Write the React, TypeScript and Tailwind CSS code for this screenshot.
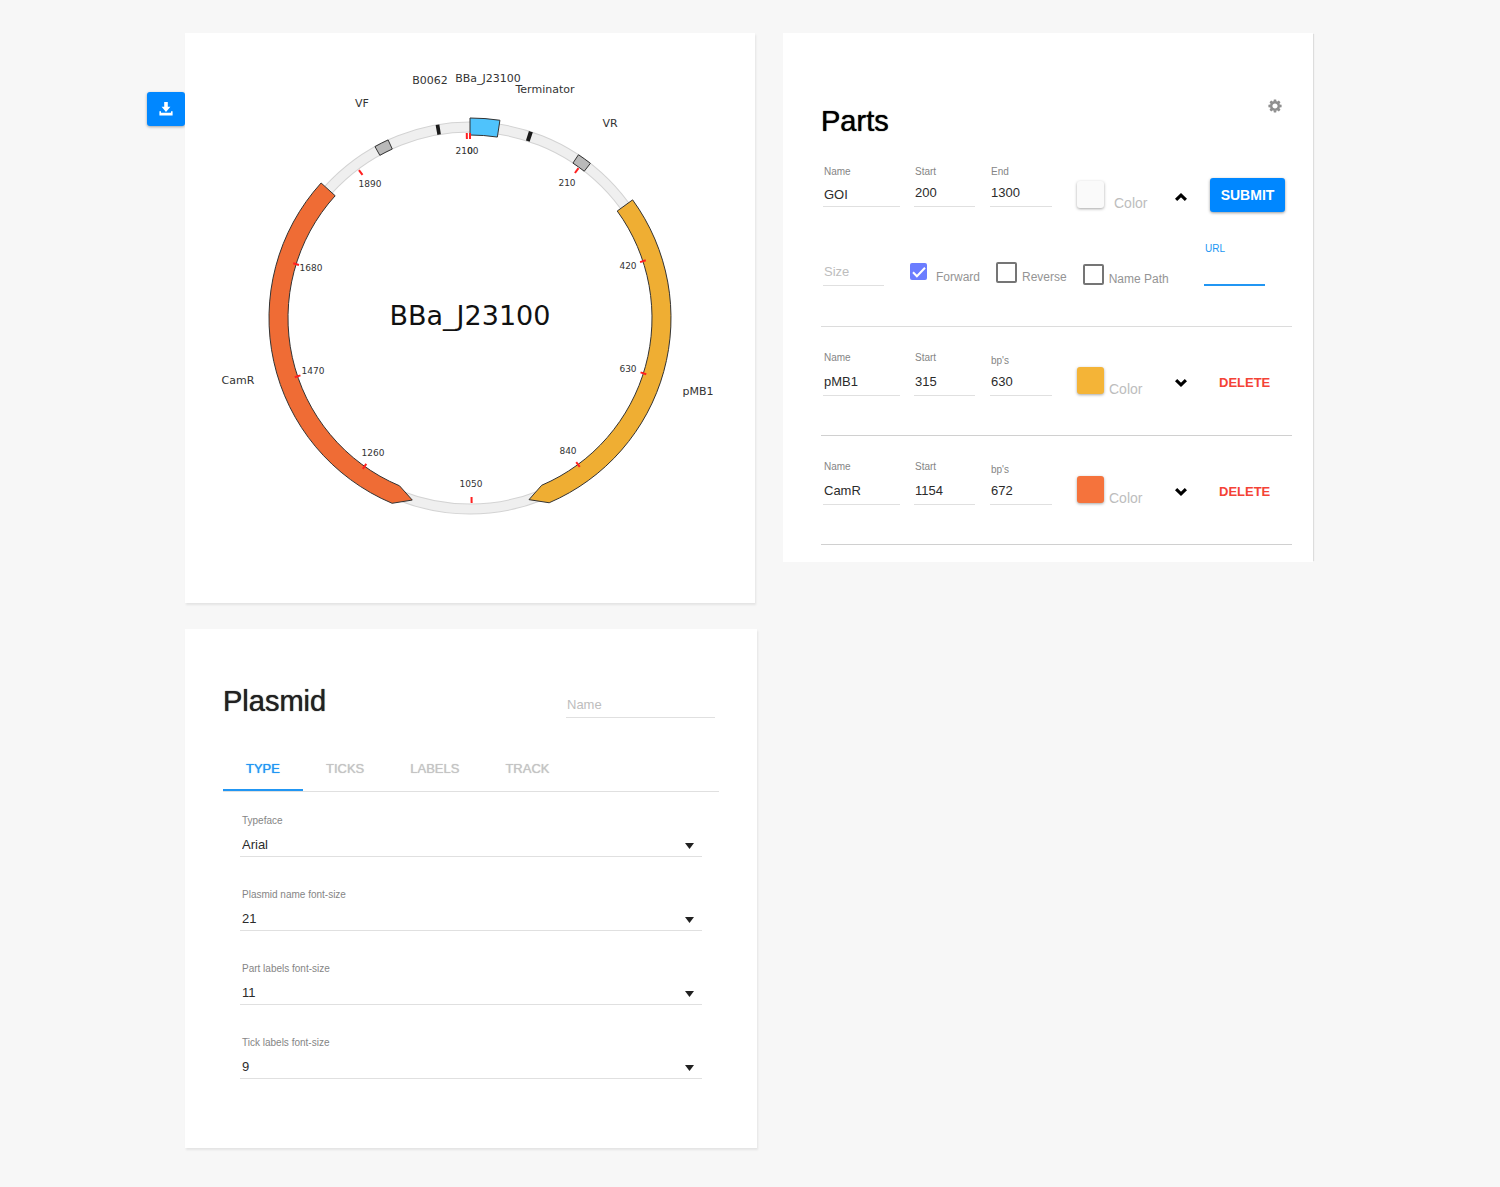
import { useId, useState } from "react";
import type { ReactNode } from "react";

const LABEL = "block text-[10px] leading-3 text-[#858585]";
const INPUT =
  "block h-[26px] w-full min-w-0 rounded-none border-b border-[#e0e0e0] bg-transparent text-[13px] text-[#2b2b2b] outline-none placeholder:text-[#bdbdbd]";

/* ---------- Plasmid map ---------- */

const polar = (angle: number, r: number) => {
  const a = (angle * Math.PI) / 180;
  return `${(Math.sin(a) * r).toFixed(2)} ${(-Math.cos(a) * r).toFixed(2)}`;
};

const band = (from: number, to: number, inner: number, outer: number) => {
  const large = to - from > 180 ? 1 : 0;
  return `M${polar(from, outer)}A${outer} ${outer} 0 ${large} 1 ${polar(to, outer)}L${polar(to, inner)}A${inner} ${inner} 0 ${large} 0 ${polar(from, inner)}Z`;
};

const INNER = 182;
const OUTER = 201;
const HEAD = 5.2;

const forwardArrow = (from: number, to: number) =>
  `M${polar(from, OUTER)}A${OUTER} ${OUTER} 0 0 1 ${polar(to - HEAD, OUTER)}L${polar(to, 191)}L${polar(to - HEAD, INNER)}A${INNER} ${INNER} 0 0 0 ${polar(from, INNER)}Z`;

const reverseArrow = (from: number, to: number) =>
  `M${polar(to, OUTER)}A${OUTER} ${OUTER} 0 0 0 ${polar(from + HEAD, OUTER)}L${polar(from, 191)}L${polar(from + HEAD, INNER)}A${INNER} ${INNER} 0 0 1 ${polar(to, INNER)}Z`;

const TICKS = [
  { bp: 0, x: 0, y: -164 },
  { bp: 210, x: 97, y: -132 },
  { bp: 420, x: 158, y: -49 },
  { bp: 630, x: 158, y: 54 },
  { bp: 840, x: 98, y: 136 },
  { bp: 1050, x: 1, y: 169 },
  { bp: 1260, x: -97, y: 138 },
  { bp: 1470, x: -157, y: 56 },
  { bp: 1680, x: -159, y: -47 },
  { bp: 1890, x: -100, y: -131 },
  { bp: 2100, x: -3, y: -164 },
];

const PART_LABELS = [
  { text: "VF", x: -108, y: -211 },
  { text: "B0062", x: -40, y: -234 },
  { text: "BBa_J23100", x: 18, y: -236 },
  { text: "Terminator", x: 75, y: -225 },
  { text: "VR", x: 140, y: -191 },
  { text: "pMB1", x: 228, y: 77 },
  { text: "CamR", x: -232, y: 66 },
];

function PlasmidMap() {
  return (
    <svg viewBox="-285 -285 570 570" className="block w-full font-['DejaVu_Sans',sans-serif]" role="img" aria-label="Plasmid map of BBa_J23100">
      <circle r="191" fill="none" stroke="#d3d3d3" strokeWidth="11" />
      <circle r="191" fill="none" stroke="#efefef" strokeWidth="9" />
      <g stroke="#333" strokeWidth="1">
        <path d={band(0, 8.6, 183, 200)} fill="#4fc3fc" />
        <path d={band(33.6, 37.9, 186, 196)} fill="#b9b9b9" />
        <path d={band(331, 335.3, 186, 196)} fill="#b9b9b9" />
        <path d={forwardArrow(54, 162)} fill="#efae33" />
        <path d={reverseArrow(197.6, 312.2)} fill="#ef6c35" />
      </g>
      <path d={band(17.5, 18.7, 186, 196)} fill="#1a1a1a" />
      <path d={band(349.9, 351, 186, 196)} fill="#1a1a1a" />
      {TICKS.map((t) => (
        <g key={t.bp}>
          <path d={`M${polar((t.bp * 359) / 2100, 179)}L${polar((t.bp * 359) / 2100, 185)}`} stroke="#ff2020" strokeWidth="2" />
          <text x={t.x} y={t.y} textAnchor="middle" className="text-[9px]" fill="#333">
            {t.bp}
          </text>
        </g>
      ))}
      {PART_LABELS.map((l) => (
        <text key={l.text} x={l.x} y={l.y} textAnchor="middle" className="text-[11px]" fill="#333">
          {l.text}
        </text>
      ))}
      <text x="0" y="7" textAnchor="middle" className="text-[27px]" fill="#111">
        BBa_J23100
      </text>
    </svg>
  );
}

/* ---------- Icons ---------- */

function DownloadIcon() {
  return (
    <svg width="14" height="14" viewBox="0 0 14 14" fill="#fff" aria-hidden="true">
      <path d="M5.2 0h3.6v4.8h2.6L7 10 2.6 4.8h2.6z" />
      <path d="M.4 9.2H2v1.6h10V9.2h1.6v4.2H.4z" />
    </svg>
  );
}

function GearIcon() {
  return (
    <svg width="14" height="14" viewBox="-7 -7 14 14" aria-hidden="true">
      <circle r="3.8" fill="none" stroke="#8f8f8f" strokeWidth="2.4" />
      {[0, 45, 90, 135, 180, 225, 270, 315].map((a) => (
        <path key={a} d="M-1.5 -4.4L-1.2 -6.6H1.2L1.5 -4.4Z" fill="#8f8f8f" transform={`rotate(${a})`} />
      ))}
    </svg>
  );
}

function Chevron({ up }: { up?: boolean }) {
  return (
    <svg width="12" height="8" viewBox="0 0 12 8" fill="none" stroke="#000" strokeWidth="3.2" aria-hidden="true">
      <path d={up ? "M1.1 6.8L6 2.2L10.9 6.8" : "M1.1 1.2L6 5.8L10.9 1.2"} />
    </svg>
  );
}

/* ---------- Parts panel ---------- */

type FieldProps = { label: string; value: string; labelClass: string; inputClass?: string; className?: string };

function Field({ label, value, labelClass, inputClass = "pb-0.5", className = "" }: FieldProps) {
  const id = useId();
  return (
    <div className={className}>
      <label htmlFor={id} className={`${LABEL} ${labelClass} pl-px`}>
        {label}
      </label>
      <input id={id} defaultValue={value} className={`${INPUT} pl-px ${inputClass}`} />
    </div>
  );
}

function Swatch({ color, gap }: { color: string; gap: string }) {
  const id = useId();
  return (
    <div className={`flex items-baseline ${gap}`}>
      <button id={id} type="button" className={`h-[27px] w-[27px] shrink-0 rounded-[3px] shadow-[0_1px_3px_rgba(0,0,0,0.35)] ${color}`} />
      <label htmlFor={id} className="text-[14px] leading-none text-[#bdbdbd]">
        Color
      </label>
    </div>
  );
}

const ROW = "grid grid-cols-[93fr_76fr_87fr_98fr_35fr_82fr] items-end";

function PartRow({ name, start, bps, color }: { name: string; start: string; bps: string; color: string }) {
  return (
    <li className={`${ROW} border-b border-[#d0d0d0] pt-[25px] pb-[39px]`}>
      <Field label="Name" value={name} labelClass="mb-1.5" className="mr-3.5 ml-0.5" />
      <Field label="Start" value={start} labelClass="mb-1.5" className="mr-[15px]" />
      <Field label="bp's" value={bps} labelClass="mb-[3px]" className="mr-[25px]" />
      <Swatch color={color} gap="gap-[5px]" />
      <button type="button" aria-label={`Expand ${name}`} className="flex h-[27px] w-3 items-center">
        <Chevron />
      </button>
      <button type="button" className="flex h-[27px] items-center pl-[9px] text-[13px] font-bold text-[#f44336]">
        DELETE
      </button>
    </li>
  );
}

function Check({ label, checked, className, boxClass, children }: { label: string; checked?: boolean; className: string; boxClass: string; children?: ReactNode }) {
  return (
    <label className={`flex items-end text-[12px] leading-4 whitespace-nowrap text-[#949494] ${className}`}>
      <span className={`relative block shrink-0 ${boxClass}`}>
        <input
          type="checkbox"
          defaultChecked={checked}
          className="peer block h-full w-full appearance-none rounded-[2px] border-2 border-[#757575] checked:border-0 checked:bg-[#6b7dff]"
        />
        {children}
      </span>
      {label}
    </label>
  );
}

function PartsPanel() {
  return (
    <section className="bg-white pt-[66px] pr-[21px] pb-[17px] pl-[38px] shadow-[2px_0_1px_-1px_rgba(0,0,0,0.1)]">
      <header className="flex items-start justify-between pr-[10px]">
        <h2 className="mt-1 text-[29px] leading-9 font-medium text-black [text-shadow:0_0_1px_currentColor]">Parts</h2>
        <button type="button" aria-label="Settings">
          <GearIcon />
        </button>
      </header>

      <form className="border-b border-[#dcdcdc] pt-[27px] pb-10" onSubmit={(e) => e.preventDefault()}>
        <div className={ROW}>
          <Field label="Name" value="GOI" labelClass="mb-[3px]" inputClass="pt-0.5" className="mr-3.5 mb-[5px] ml-0.5" />
          <Field label="Start" value="200" labelClass="mb-[3px]" className="mr-[15px] mb-[5px]" />
          <Field label="End" value="1300" labelClass="mb-[3px]" className="mr-[25px] mb-[5px]" />
          <div className="mb-0.5">
            <Swatch color="bg-[#fafafa]" gap="gap-2.5" />
          </div>
          <button type="button" aria-label="Collapse" className="mb-0.5 flex h-[27px] w-3 items-center">
            <Chevron up />
          </button>
          <button
            type="submit"
            className="mr-[7px] h-[34px] rounded-[3px] bg-[#0087ff] text-[14px] font-bold text-white shadow-[0_1px_3px_rgba(0,0,0,0.4)]"
          >
            SUBMIT
          </button>
        </div>

        <div className="mt-[31px] flex items-end pl-0.5">
          <input aria-label="Size" placeholder="Size" className={`${INPUT} max-w-[61px] pb-0.5 pl-px`} />
          <Check label="Forward" checked className="mb-px ml-[26px]" boxClass="mr-[9px] mb-[5px] h-[17px] w-[17px]">
            <svg viewBox="0 0 17 17" className="pointer-events-none absolute inset-0 hidden h-full w-full peer-checked:block" fill="none" stroke="#fff" strokeWidth="2" aria-hidden="true">
              <path d="M3 9.2L6.9 13.2L15 4.8" />
            </svg>
          </Check>
          <Check label="Reverse" className="mb-px ml-4" boxClass="mr-[5px] mb-0.5 h-[21px] w-[21px]" />
          <Check label="Name Path" className="-mb-px ml-4" boxClass="mr-[5px] mb-0.5 h-[21px] w-[21px]" />
          <div className="mr-[27px] ml-auto w-[61px]">
            <label htmlFor="part-url" className="mb-[5px] block pl-px text-[10px] leading-3 text-[#2196f3]">
              URL
            </label>
            <input id="part-url" className="block h-[26px] w-full border-b-2 border-[#2196f3] pl-px text-[13px] outline-none" />
          </div>
        </div>
      </form>

      <ul>
        <PartRow name="pMB1" start="315" bps="630" color="bg-[#f4b437]" />
        <PartRow name="CamR" start="1154" bps="672" color="bg-[#f5733c]" />
      </ul>
    </section>
  );
}

/* ---------- Plasmid settings ---------- */

const SETTINGS = [
  { label: "Typeface", value: "Arial" },
  { label: "Plasmid name font-size", value: "21" },
  { label: "Part labels font-size", value: "11" },
  { label: "Tick labels font-size", value: "9" },
];

function SelectField({ label, value }: { label: string; value: string }) {
  const id = useId();
  return (
    <div>
      <label htmlFor={id} className={`${LABEL} mb-1 pl-0.5`}>
        {label}
      </label>
      <div className="relative">
        <select id={id} defaultValue={value} className={`${INPUT} appearance-none pt-[3px] pl-0.5`}>
          <option>{value}</option>
        </select>
        <svg width="9" height="6" viewBox="0 0 9 6" className="pointer-events-none absolute right-2 bottom-2" aria-hidden="true">
          <path d="M0 0H9L4.5 6Z" fill="#212121" />
        </svg>
      </div>
    </div>
  );
}

function PlasmidPanel() {
  const [tab, setTab] = useState("TYPE");
  return (
    <section className="bg-white px-[38px] pt-[54px] pb-[69px] shadow-[1px_2px_2px_rgba(0,0,0,0.08)]">
      <header className="flex items-end justify-between pr-1">
        <h2 className="text-[29px] leading-9 font-medium text-[#212121] [text-shadow:0_0_1px_currentColor]">Plasmid</h2>
        <input aria-label="Name" placeholder="Name" className={`${INPUT} mb-px max-w-[149px] pl-px`} />
      </header>
      <div role="tablist" className="mt-[27px] flex border-b border-[#e0e0e0]">
        {["TYPE", "TICKS", "LABELS", "TRACK"].map((t) => (
          <button
            key={t}
            type="button"
            role="tab"
            aria-selected={tab === t}
            onClick={() => setTab(t)}
            className={`h-[45px] border-b-2 px-[23px] pt-0.5 text-[13px] font-medium [text-shadow:0_0_1px_currentColor] ${
              tab === t ? "border-[#2196f3] text-[#2196f3]" : "border-transparent text-[#c4c4c4]"
            }`}
          >
            {t}
          </button>
        ))}
      </div>
      <div className="mx-[17px] mt-[23px] flex flex-col gap-8">
        {SETTINGS.map((s) => (
          <SelectField key={s.label} label={s.label} value={s.value} />
        ))}
      </div>
    </section>
  );
}

export default function App() {
  return (
    <main className="flex min-h-screen items-start bg-[#f7f7f7] pt-[33px] pr-[187px] pb-[38px] pl-[147px] font-['Liberation_Sans',Arial,sans-serif]">
      <button
        type="button"
        aria-label="Download"
        className="mt-[59px] flex h-[34px] w-[38px] shrink-0 items-center justify-center rounded-[3px] bg-[#0087ff] shadow-[0_1px_3px_rgba(0,0,0,0.35)]"
      >
        <DownloadIcon />
      </button>
      <div className="flex min-w-0 flex-1 items-start gap-[26px]">
        <div className="flex min-w-0 flex-[572] flex-col gap-[26px]">
          <section className="mr-0.5 bg-white shadow-[1px_2px_2px_rgba(0,0,0,0.08)]">
            <PlasmidMap />
          </section>
          <PlasmidPanel />
        </div>
        <div className="min-w-0 flex-[530]">
          <PartsPanel />
        </div>
      </div>
    </main>
  );
}
